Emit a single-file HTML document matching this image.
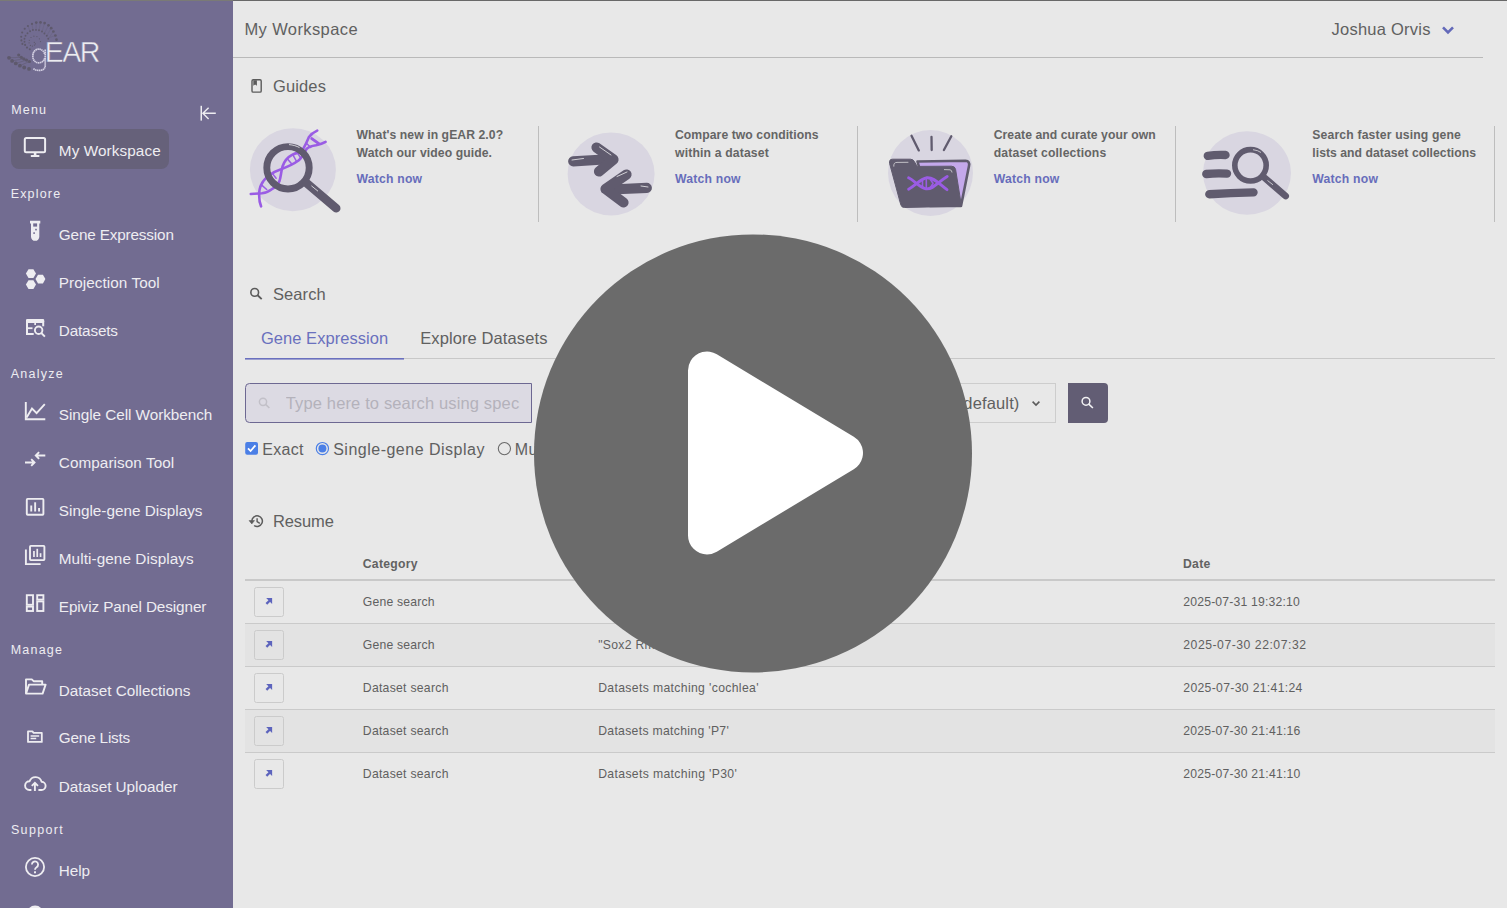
<!DOCTYPE html>
<html><head><meta charset="utf-8">
<style>
html,body{margin:0;padding:0;}
body{width:1507px;height:908px;overflow:hidden;position:relative;background:#e8e8e8;font-family:"Liberation Sans", sans-serif;}
.t{position:absolute;white-space:nowrap;line-height:normal;}
svg.full{position:absolute;left:0;top:0;}
</style></head><body>
<svg class="full" width="1507" height="908" viewBox="0 0 1507 908">

<rect x="0" y="0" width="233" height="908" fill="#726c91"/>
<rect x="0" y="0" width="233" height="1" fill="#7a7a76"/><rect x="233" y="0" width="1274" height="1" fill="#686868"/>
<rect x="11" y="129" width="158" height="40" rx="8" fill="#66617a"/>
<rect x="233" y="57" width="1250" height="1" fill="#b9b9b9"/>
<!-- guide dividers -->
<rect x="538" y="126" width="1" height="96" fill="#bdbdbd"/>
<rect x="857" y="126" width="1" height="96" fill="#bdbdbd"/>
<rect x="1175" y="126" width="1" height="96" fill="#bdbdbd"/>
<rect x="1494" y="126" width="1" height="96" fill="#bdbdbd"/>
<!-- tabs -->
<rect x="245" y="358" width="1250" height="1" fill="#c8c8c8"/>
<rect x="245" y="358" width="159" height="1.6" fill="#6a70be"/>
<!-- input -->
<path d="M249.5 383.5 H531.5 V422.5 H249.5 A4 4 0 0 1 245.5 418.5 V387.5 A4 4 0 0 1 249.5 383.5 Z" fill="#dcdae3" stroke="#6d6892" stroke-width="1"/>
<!-- select -->
<rect x="880.5" y="383.5" width="175" height="39" fill="none" stroke="#cdcdcd" stroke-width="1"/>
<path d="M1068 383 H1104 A4 4 0 0 1 1108 387 V419 A4 4 0 0 1 1104 423 H1068 Z" fill="#625d74"/>
<!-- table -->
<rect x="245" y="579" width="1250" height="2" fill="#c9c9c9"/>
<rect x="245" y="624" width="1250" height="42" fill="#e3e3e3"/>
<rect x="245" y="710" width="1250" height="42" fill="#e3e3e3"/>
<rect x="245" y="623" width="1250" height="1" fill="#cacaca"/>
<rect x="245" y="666" width="1250" height="1" fill="#cacaca"/>
<rect x="245" y="709" width="1250" height="1" fill="#cacaca"/>
<rect x="245" y="752" width="1250" height="1" fill="#cacaca"/>
<rect x="254.5" y="587.5" width="29" height="29" rx="2" fill="none" stroke="#cbcbcb" stroke-width="1"/>
<path d="M266.4 603.9 L270.6 599.7" stroke="#5d64bd" stroke-width="2.3"/><path d="M266.2 598 H272.1 V603.9 Z" fill="#5d64bd"/>
<rect x="254.5" y="630.5" width="29" height="29" rx="2" fill="none" stroke="#cbcbcb" stroke-width="1"/>
<path d="M266.4 646.9 L270.6 642.7" stroke="#5d64bd" stroke-width="2.3"/><path d="M266.2 641 H272.1 V646.9 Z" fill="#5d64bd"/>
<rect x="254.5" y="673.5" width="29" height="29" rx="2" fill="none" stroke="#cbcbcb" stroke-width="1"/>
<path d="M266.4 689.9 L270.6 685.7" stroke="#5d64bd" stroke-width="2.3"/><path d="M266.2 684 H272.1 V689.9 Z" fill="#5d64bd"/>
<rect x="254.5" y="716.5" width="29" height="29" rx="2" fill="none" stroke="#cbcbcb" stroke-width="1"/>
<path d="M266.4 732.9 L270.6 728.7" stroke="#5d64bd" stroke-width="2.3"/><path d="M266.2 727 H272.1 V732.9 Z" fill="#5d64bd"/>
<rect x="254.5" y="759.5" width="29" height="29" rx="2" fill="none" stroke="#cbcbcb" stroke-width="1"/>
<path d="M266.4 775.9 L270.6 771.7" stroke="#5d64bd" stroke-width="2.3"/><path d="M266.2 770 H272.1 V775.9 Z" fill="#5d64bd"/>

<!-- monitor -->
<rect x="24.8" y="137.9" width="20.3" height="14.3" rx="1.5" fill="none" stroke="#eeedf1" stroke-width="2"/>
<rect x="33.8" y="153" width="2.6" height="2.5" fill="#eeedf1"/>
<rect x="30.8" y="154.9" width="8.6" height="2.2" rx="0.6" fill="#eeedf1"/>
<!-- collapse |<- -->
<rect x="200.5" y="105.8" width="1.5" height="14.8" fill="#eeedf1"/>
<path d="M215.8 113.3 H203.2 M208.6 107.7 L202.9 113.3 L208.6 118.9" fill="none" stroke="#eeedf1" stroke-width="1.4"/>
<!-- test tube -->
<path d="M30 220.8 H40.3 V223.4 H39.3 V236.7 A4.15 4.15 0 0 1 31 236.7 V223.4 H30 Z" fill="#eeedf1"/>
<rect x="33.2" y="223.4" width="3.9" height="3.2" fill="#726c91"/>
<rect x="35.2" y="228.8" width="1.6" height="1.6" fill="#726c91"/>
<rect x="33.3" y="232.3" width="1.6" height="1.6" fill="#726c91"/>
<!-- hexagons -->
<path d="M28.5 269.2 H33.4 L36 273.6 L33.4 278 H28.5 L25.9 273.6 Z" fill="#eeedf1"/>
<path d="M28.5 280.2 H33.4 L36 284.6 L33.4 289 H28.5 L25.9 284.6 Z" fill="#eeedf1"/>
<path d="M38 274.7 H42.9 L45.4 279.1 L42.9 283.5 H38 L35.5 279.1 Z" fill="#eeedf1"/>
<!-- datasets EQ -->
<rect x="26" y="318.9" width="18.2" height="4" rx="1.2" fill="#eeedf1"/>
<rect x="26" y="321" width="2" height="14" fill="#eeedf1"/>
<rect x="26" y="333" width="7.7" height="2" fill="#eeedf1"/>
<rect x="26" y="327.3" width="6.5" height="1.8" fill="#eeedf1"/>
<rect x="42.2" y="321" width="2" height="5.3" fill="#eeedf1"/>
<rect x="34.3" y="322" width="1.7" height="3" fill="#eeedf1"/>
<circle cx="38.65" cy="330.3" r="3.75" fill="none" stroke="#eeedf1" stroke-width="1.9"/>
<path d="M41.3 333 L44.9 336.6" stroke="#eeedf1" stroke-width="1.9"/>
<!-- line chart -->
<path d="M25.8 402 V419.2 H45.3" fill="none" stroke="#eeedf1" stroke-width="1.9"/>
<path d="M26.6 417.6 L32 408.6 L36.6 413.2 L44.8 404.2" fill="none" stroke="#eeedf1" stroke-width="1.9"/>
<!-- compare arrows -->
<path d="M25 462.5 H34.5 M31.2 459.2 L34.5 462.5 L31.2 465.8" fill="none" stroke="#eeedf1" stroke-width="1.9"/>
<path d="M45.3 455.5 H35.8 M39.1 452.2 L35.8 455.5 L39.1 458.8" fill="none" stroke="#eeedf1" stroke-width="1.9"/>
<!-- single gene displays -->
<rect x="26.8" y="498.9" width="16.6" height="15.8" rx="0.8" fill="none" stroke="#eeedf1" stroke-width="1.9"/>
<rect x="30.3" y="505.5" width="1.9" height="6" fill="#eeedf1"/>
<rect x="34.2" y="502.3" width="1.9" height="9.2" fill="#eeedf1"/>
<rect x="38.1" y="508" width="1.9" height="3.5" fill="#eeedf1"/>
<!-- multi gene -->
<rect x="30" y="545.9" width="14.4" height="14.2" rx="0.8" fill="none" stroke="#eeedf1" stroke-width="1.9"/>
<path d="M25.9 549.5 V564.1 H40.6" fill="none" stroke="#eeedf1" stroke-width="1.9"/>
<rect x="33.1" y="551" width="1.7" height="6" fill="#eeedf1"/>
<rect x="36.4" y="548.8" width="1.7" height="8.2" fill="#eeedf1"/>
<rect x="39.7" y="553.2" width="1.7" height="3.8" fill="#eeedf1"/>
<!-- epiviz dashboard -->
<rect x="26.8" y="595.2" width="6.2" height="9.6" fill="none" stroke="#eeedf1" stroke-width="1.9"/>
<rect x="37.2" y="595.2" width="6.2" height="4.4" fill="none" stroke="#eeedf1" stroke-width="1.9"/>
<rect x="26.8" y="606.6" width="6.2" height="4.4" fill="none" stroke="#eeedf1" stroke-width="1.9"/>
<rect x="37.2" y="601.4" width="6.2" height="9.6" fill="none" stroke="#eeedf1" stroke-width="1.9"/>
<!-- open folder -->
<path d="M26 693.6 V679.4 H31.8 L33.6 681.2 H42.2 V684.4" fill="none" stroke="#eeedf1" stroke-width="1.9" stroke-linejoin="round"/>
<path d="M26 693.6 L29 684.6 H45.6 L42.6 693.6 Z" fill="none" stroke="#eeedf1" stroke-width="1.9" stroke-linejoin="round"/>
<!-- gene lists folder -->
<path d="M28 731.4 H32.4 L33.6 732.8 H41.8 V741.9 H28 Z" fill="none" stroke="#eeedf1" stroke-width="1.8" stroke-linejoin="round"/>
<path d="M30.6 735.9 H39.2 M30.6 738.6 H36.2" stroke="#eeedf1" stroke-width="1.5"/>
<!-- cloud upload -->
<path d="M31.4 790 H29.4 A4.3 4.3 0 0 1 29.6 781.2 A6.3 6.3 0 0 1 41.6 781.8 A4.1 4.1 0 0 1 41.4 790 H38.4" fill="none" stroke="#eeedf1" stroke-width="1.9" stroke-linejoin="round"/>
<path d="M34.9 791 V782.8 M31.8 785.9 L34.9 782.8 L38 785.9" fill="none" stroke="#eeedf1" stroke-width="1.9"/>
<!-- help -->
<circle cx="35" cy="867" r="9.1" fill="none" stroke="#eeedf1" stroke-width="1.8"/>
<path d="M31.9 864.6 A3.1 3.1 0 1 1 36.6 867.2 C35.4 868 35 868.6 35 869.8" fill="none" stroke="#eeedf1" stroke-width="1.8"/>
<rect x="34" y="871.3" width="2" height="2" fill="#eeedf1"/>
<ellipse cx="35.1" cy="915.1" rx="8.9" ry="9.5" fill="#eeedf1"/>

<!-- user chevron -->
<path d="M1443 27.3 L1448 32.4 L1453 27.3" fill="none" stroke="#6369b9" stroke-width="2.6"/>
<!-- guides book -->
<rect x="252" y="79.8" width="9.2" height="12.3" rx="1.2" fill="none" stroke="#5b5b5b" stroke-width="1.4"/>
<path d="M253.3 80.3 H256.9 V85.8 L255.1 84.6 L253.3 85.8 Z" fill="#5b5b5b"/>
<!-- search heading icon -->
<circle cx="254.7" cy="292.4" r="3.85" fill="none" stroke="#5b5b5b" stroke-width="1.6"/>
<path d="M257.6 295.3 L261.7 299.1" stroke="#5b5b5b" stroke-width="1.9"/>
<!-- history icon -->
<path d="M251.8 520.7 A5.3 5.3 0 1 1 254.1 525.5" fill="none" stroke="#5b5b5b" stroke-width="1.5"/>
<path d="M249.1 520.6 H254.5 L251.8 523.9 Z" fill="#5b5b5b" stroke="#5b5b5b" stroke-width="0.6" stroke-linejoin="round"/>
<path d="M257.1 518.2 V521.6 L259.8 523.3" fill="none" stroke="#5b5b5b" stroke-width="1.4"/>
<!-- input search icon -->
<circle cx="263" cy="401.8" r="3.6" fill="none" stroke="#c2c0c8" stroke-width="1.5"/>
<path d="M265.6 404.4 L269.4 408" stroke="#c2c0c8" stroke-width="1.6"/>
<!-- select chevron -->
<path d="M1032.6 401.6 L1036 405 L1039.4 401.6" fill="none" stroke="#5b5b5b" stroke-width="1.6"/>
<!-- search button icon -->
<circle cx="1086" cy="401.3" r="3.9" fill="none" stroke="#f2f2f4" stroke-width="1.5"/>
<path d="M1088.8 404.1 L1092.9 408" stroke="#f2f2f4" stroke-width="1.6"/>
<!-- checkbox -->
<rect x="245.2" y="441.9" width="12.8" height="12.9" rx="2" fill="#4b7fe6"/>
<path d="M248 448.3 L250.6 451 L255.4 445.4" fill="none" stroke="#ffffff" stroke-width="1.8"/>
<!-- radios -->
<circle cx="322.4" cy="448.6" r="6.1" fill="#e8e8e8" stroke="#4b7fe6" stroke-width="1.2"/>
<circle cx="322.4" cy="448.6" r="4" fill="#4b7fe6"/>
<circle cx="504.4" cy="448.6" r="6.1" fill="#e8e8e8" stroke="#6a6a6a" stroke-width="1.1"/>

<line x1="36.25" y1="22.6" x2="36" y2="29.9" stroke="#5e596c" stroke-width="0.45" opacity="0.55"/>
<line x1="40.5" y1="22.4" x2="39" y2="30.2" stroke="#5e596c" stroke-width="0.45" opacity="0.55"/>
<line x1="44.6" y1="23.1" x2="42" y2="31.5" stroke="#5e596c" stroke-width="0.45" opacity="0.55"/>
<line x1="48.5" y1="25.3" x2="44.4" y2="33.5" stroke="#5e596c" stroke-width="0.45" opacity="0.55"/>
<line x1="51.2" y1="28.2" x2="46.8" y2="35.8" stroke="#5e596c" stroke-width="0.45" opacity="0.55"/>
<line x1="53.4" y1="31.5" x2="48.3" y2="38.8" stroke="#5e596c" stroke-width="0.45" opacity="0.55"/>
<line x1="32" y1="23.9" x2="32.9" y2="30" stroke="#5e596c" stroke-width="0.45" opacity="0.55"/>
<line x1="27.9" y1="26" x2="30.1" y2="31.3" stroke="#5e596c" stroke-width="0.45" opacity="0.55"/>
<line x1="55.4" y1="35.5" x2="49.5" y2="37.5" stroke="#5e596c" stroke-width="0.45" opacity="0.55"/>
<line x1="9" y1="57.8" x2="21.3" y2="57.3" stroke="#5e596c" stroke-width="0.9" opacity="0.55"/>
<line x1="12.1" y1="60.9" x2="23.8" y2="58.8" stroke="#5e596c" stroke-width="0.9" opacity="0.55"/>
<line x1="15.8" y1="63.4" x2="26.5" y2="60.1" stroke="#5e596c" stroke-width="0.9" opacity="0.55"/>
<line x1="19.9" y1="65.7" x2="29.4" y2="61.5" stroke="#5e596c" stroke-width="0.9" opacity="0.55"/>
<circle cx="36.25" cy="22.6" r="1.35" fill="#5e596c"/>
<circle cx="40.5" cy="22.4" r="1.35" fill="#5e596c"/>
<circle cx="44.6" cy="23.1" r="1.35" fill="#5e596c"/>
<circle cx="48.5" cy="25.3" r="1.35" fill="#5e596c"/>
<circle cx="51.2" cy="28.2" r="1.35" fill="#5e596c"/>
<circle cx="53.4" cy="31.5" r="1.35" fill="#5e596c"/>
<circle cx="55.4" cy="35.5" r="1.35" fill="#5e596c"/>
<circle cx="56.5" cy="39.7" r="1.35" fill="#5e596c"/>
<circle cx="32" cy="23.9" r="1.05" fill="#5e596c"/>
<circle cx="27.9" cy="26" r="1.05" fill="#5e596c"/>
<circle cx="24.7" cy="28.8" r="1.05" fill="#5e596c"/>
<circle cx="22.2" cy="32.5" r="1.05" fill="#5e596c"/>
<circle cx="21.2" cy="36.8" r="1.05" fill="#5e596c"/>
<circle cx="21.4" cy="40.4" r="1.05" fill="#5e596c"/>
<circle cx="22.4" cy="43.9" r="1.05" fill="#5e596c"/>
<circle cx="25.1" cy="44.9" r="1.05" fill="#5e596c"/>
<circle cx="27" cy="47.6" r="1.05" fill="#5e596c"/>
<circle cx="29.8" cy="49.2" r="1.05" fill="#5e596c"/>
<circle cx="30.1" cy="31.3" r="0.95" fill="#5e596c"/>
<circle cx="32.9" cy="30" r="0.95" fill="#5e596c"/>
<circle cx="36" cy="29.9" r="0.95" fill="#5e596c"/>
<circle cx="39" cy="30.2" r="0.95" fill="#5e596c"/>
<circle cx="42" cy="31.5" r="0.95" fill="#5e596c"/>
<circle cx="44.4" cy="33.5" r="0.95" fill="#5e596c"/>
<circle cx="46.8" cy="35.8" r="0.95" fill="#5e596c"/>
<circle cx="48.3" cy="38.8" r="0.95" fill="#5e596c"/>
<circle cx="27.5" cy="33.3" r="0.95" fill="#5e596c"/>
<circle cx="25.5" cy="35.8" r="0.95" fill="#5e596c"/>
<circle cx="24.5" cy="38.8" r="0.95" fill="#5e596c"/>
<circle cx="24.5" cy="41.8" r="0.95" fill="#5e596c"/>
<circle cx="31" cy="37.5" r="0.6" fill="#5e596c"/>
<circle cx="33.9" cy="36.2" r="0.6" fill="#5e596c"/>
<circle cx="36.9" cy="36.6" r="0.6" fill="#5e596c"/>
<circle cx="39.4" cy="38.8" r="0.6" fill="#5e596c"/>
<circle cx="40.5" cy="41.6" r="0.6" fill="#5e596c"/>
<circle cx="29.3" cy="40.3" r="0.6" fill="#5e596c"/>
<circle cx="29.1" cy="42.8" r="0.6" fill="#5e596c"/>
<circle cx="30.4" cy="45.4" r="0.6" fill="#5e596c"/>
<circle cx="32.4" cy="46.1" r="0.6" fill="#5e596c"/>
<circle cx="34.5" cy="45.1" r="0.6" fill="#5e596c"/>
<circle cx="35.4" cy="43.8" r="0.6" fill="#5e596c"/>
<circle cx="34.3" cy="42.4" r="0.6" fill="#5e596c"/>
<circle cx="9" cy="57.8" r="1.9" fill="#5e596c"/>
<circle cx="12.1" cy="60.9" r="1.9" fill="#5e596c"/>
<circle cx="15.8" cy="63.4" r="1.9" fill="#5e596c"/>
<circle cx="19.9" cy="65.7" r="1.9" fill="#5e596c"/>
<circle cx="24.2" cy="67.5" r="1.9" fill="#5e596c"/>
<circle cx="29" cy="68.9" r="1.9" fill="#5e596c"/>
<circle cx="18.7" cy="55" r="1.6" fill="#5e596c"/>
<circle cx="21.3" cy="57.3" r="1.6" fill="#5e596c"/>
<circle cx="23.8" cy="58.8" r="1.6" fill="#5e596c"/>
<circle cx="26.5" cy="60.1" r="1.6" fill="#5e596c"/>
<circle cx="29.4" cy="61.5" r="1.6" fill="#5e596c"/>
<path d="M45.2 49.6 V65.5 C45.2 69.6 42 70.4 38.8 70.4 C36.2 70.4 34.4 69.6 33.3 68.6 M44.6 53.8 C43.6 50.8 41.4 49.1 38.8 49.1 C35.2 49.1 32.8 52.2 32.8 56.1 C32.8 60 35.2 62.8 38.8 62.8 C41.6 62.8 43.6 61.2 44.6 58.4" fill="none" stroke="#d3cfe2" stroke-width="1.7" stroke-dasharray="1.5 0.45"/>

<ellipse cx="292.9" cy="169.7" rx="43" ry="41.5" fill="#d9d6e1"/>
<g fill="none" stroke="#9a5ce4" stroke-width="2.6" stroke-linecap="round">
<path d="M261.1 206.4 C258.6 201 258.4 190 261.1 184.9 C263 180.5 265 178.6 268.5 176 C272 173 275 171 281 169.2 C287 167 293 164.5 298.5 160.5 C302 157.5 304.5 152.5 306.5 149 C309 146.6 313 145.8 316 145.3 C319 144.6 322.5 143.6 325.6 141.8"/>
<path d="M250.8 194 C254 193.8 258.5 193.6 262 193.3 C266 192.6 269 191.5 271.4 189.5 C275.5 187 278 185 279.5 181 C281 176 281 172 282.5 166.5 C284 162 287 157.5 292 154.9 C295 153.2 298 152.6 300.4 152.1 C304 149 305.8 144 308.8 137.2 C311 134 314 132 317.2 130.6"/>
<path d="M262 185.4 L266.7 189.5 M273.3 174.6 L276.1 178.3 M287.3 158.7 L292 164.3 M292.9 154.9 L296.6 161.5 M297.6 153.1 L300.4 157.7 M306.9 143.7 L310.7 147.5" stroke-width="1.5"/>
<path d="M311.8 138.6 L318.8 143.6" stroke-width="3"/>
</g>
<circle cx="288" cy="167.8" r="21.2" fill="none" stroke="#605b6e" stroke-width="6.9"/>
<path d="M306.5 183 L336.2 208.3" stroke="#605b6e" stroke-width="8.6" stroke-linecap="round"/>
<path d="M289 144.6 C293 144.9 296.5 146 299.5 147.6" fill="none" stroke="#ffffff" stroke-width="0.9" opacity="0.8"/>
<path d="M311.4 185.8 L318 191.2" stroke="#ffffff" stroke-width="0.9" opacity="0.8"/>


<ellipse cx="611.1" cy="173.9" rx="43.5" ry="41.5" fill="#d9d6e1"/>
<g fill="none" stroke="#605b6e" stroke-width="10.2" stroke-linecap="round" stroke-linejoin="round">
<path d="M573.2 161.3 L604 159.5"/>
<path d="M596.5 147.5 L613.5 159.5 L599 171.5"/>
<path d="M646.8 187.9 L611 189.5"/>
<path d="M626.5 174.5 L605.5 189 L623.5 202.5"/>
</g>
<g fill="none" stroke="#ffffff" stroke-width="0.9" opacity="0.8" stroke-linecap="round">
<path d="M599.5 147 L611 155"/><path d="M572 160 L583.5 158.5"/>
<path d="M617 176.5 L627 172"/><path d="M641 186 L648 187"/>
</g>


<ellipse cx="930.5" cy="173" rx="42.5" ry="43" fill="#d9d6e1"/>
<g stroke="#605b6e" stroke-width="2.3" stroke-linecap="round">
<path d="M911.5 135.8 L918.8 150.4"/><path d="M931.5 136.8 L931.7 150"/><path d="M951.3 136.2 L943.9 150"/>
</g>
<path d="M917.5 161.5 L965.5 160.8 Q970 161 969 166 L961 206 L930 206 Z" fill="#c4a8eb" stroke="#605b6e" stroke-width="2.6" stroke-linejoin="round"/>
<path d="M892.5 159.2 L910.5 159.2 Q913.5 159.3 914.6 162 L917.2 166.4 L951.5 166.2 Q955 166.2 955.6 169.5 L961.5 206.2 L904.5 207.5 Q901.6 207.6 900.8 204.8 L889.6 163.5 Q888.8 159.3 892.5 159.2 Z" fill="#605b6e" stroke="#605b6e" stroke-width="1" stroke-linejoin="round"/>
<g fill="none" stroke="#f0f0f0" stroke-width="0.8" opacity="0.85">
<path d="M893.8 166.6 Q893.4 162.4 897 162.4 L908.4 162.3"/><path d="M944 169.6 L950 169.8 Q951.8 170 952 172.5"/>
</g>
<g fill="none" stroke="#9a5ce4" stroke-width="2.9" stroke-linecap="round">
<path d="M908.6 177.8 C915 181 919 187 926 188.8 C933 189.8 938 182 947.2 176.5"/>
<path d="M908.6 189.2 C915 186 920 179 927 177.8 C934 177.3 939 184 947 189.6"/>
<path d="M922.5 180.5 V186.5 M926.3 179.5 V188 M930.5 179.8 L933 183.3 L930.5 187.5" stroke-width="1.6"/>
</g>


<ellipse cx="1247" cy="173" rx="44" ry="41.8" fill="#d9d6e1"/>
<g fill="none" stroke="#605b6e" stroke-width="8.4" stroke-linecap="round">
<path d="M1207.8 155.8 Q1216 154.6 1225.5 155"/>
<path d="M1206.3 174 Q1216 173 1227 173.6"/>
<path d="M1209.3 194.2 Q1230 192.8 1253.5 192.4"/>
</g>
<circle cx="1250.5" cy="165.3" r="15.7" fill="none" stroke="#605b6e" stroke-width="5.6"/>
<path d="M1264.5 177.8 L1285.6 196" stroke="#605b6e" stroke-width="6.8" stroke-linecap="round"/>
<path d="M1253 149.7 Q1258 150.3 1261 152.5" fill="none" stroke="#ffffff" stroke-width="0.8" opacity="0.8"/>
<path d="M1267.5 180.5 L1273 184.8" stroke="#ffffff" stroke-width="0.8" opacity="0.8"/>

</svg>
<div class="t" style="left:11.20px;top:102.69px;font-size:12.5px;font-weight:400;color:#eeedf1;letter-spacing:1.180px;">Menu</div>
<div class="t" style="left:10.70px;top:186.99px;font-size:12.5px;font-weight:400;color:#eeedf1;letter-spacing:1.173px;">Explore</div>
<div class="t" style="left:10.70px;top:367.19px;font-size:12.5px;font-weight:400;color:#eeedf1;letter-spacing:1.274px;">Analyze</div>
<div class="t" style="left:10.70px;top:642.69px;font-size:12.5px;font-weight:400;color:#eeedf1;letter-spacing:1.219px;">Manage</div>
<div class="t" style="left:10.90px;top:822.69px;font-size:12.5px;font-weight:400;color:#eeedf1;letter-spacing:1.360px;">Support</div>
<div class="t" style="left:58.80px;top:142.15px;font-size:15.3px;font-weight:400;color:#eeedf1;letter-spacing:0.094px;">My Workspace</div>
<div class="t" style="left:58.80px;top:226.45px;font-size:15.3px;font-weight:400;color:#eeedf1;letter-spacing:-0.156px;">Gene Expression</div>
<div class="t" style="left:58.80px;top:274.15px;font-size:15.3px;font-weight:400;color:#eeedf1;letter-spacing:0.062px;">Projection Tool</div>
<div class="t" style="left:58.80px;top:322.15px;font-size:15.3px;font-weight:400;color:#eeedf1;letter-spacing:-0.172px;">Datasets</div>
<div class="t" style="left:58.80px;top:406.15px;font-size:15.3px;font-weight:400;color:#eeedf1;letter-spacing:-0.046px;">Single Cell Workbench</div>
<div class="t" style="left:58.80px;top:454.15px;font-size:15.3px;font-weight:400;color:#eeedf1;letter-spacing:0.066px;">Comparison Tool</div>
<div class="t" style="left:58.80px;top:502.15px;font-size:15.3px;font-weight:400;color:#eeedf1;letter-spacing:-0.000px;">Single-gene Displays</div>
<div class="t" style="left:58.80px;top:550.15px;font-size:15.3px;font-weight:400;color:#eeedf1;letter-spacing:0.080px;">Multi-gene Displays</div>
<div class="t" style="left:58.80px;top:598.15px;font-size:15.3px;font-weight:400;color:#eeedf1;letter-spacing:-0.103px;">Epiviz Panel Designer</div>
<div class="t" style="left:58.80px;top:682.15px;font-size:15.3px;font-weight:400;color:#eeedf1;letter-spacing:-0.016px;">Dataset Collections</div>
<div class="t" style="left:58.80px;top:729.15px;font-size:15.3px;font-weight:400;color:#eeedf1;letter-spacing:-0.183px;">Gene Lists</div>
<div class="t" style="left:58.80px;top:778.15px;font-size:15.3px;font-weight:400;color:#eeedf1;letter-spacing:-0.022px;">Dataset Uploader</div>
<div class="t" style="left:58.80px;top:862.15px;font-size:15.3px;font-weight:400;color:#eeedf1;letter-spacing:-0.067px;">Help</div>
<div class="t" style="left:244.40px;top:20.17px;font-size:16.5px;font-weight:400;color:#606060;letter-spacing:0.399px;">My Workspace</div>
<div class="t" style="left:1331.50px;top:20.07px;font-size:16.5px;font-weight:400;color:#606060;letter-spacing:0.250px;">Joshua Orvis</div>
<div class="t" style="left:273.00px;top:77.07px;font-size:16.5px;font-weight:400;color:#606060;letter-spacing:0.120px;">Guides</div>
<div class="t" style="left:356.50px;top:127.76px;font-size:12.2px;font-weight:700;color:#656565;letter-spacing:0.069px;">What's new in gEAR 2.0?</div>
<div class="t" style="left:356.50px;top:145.66px;font-size:12.2px;font-weight:700;color:#656565;letter-spacing:0.090px;">Watch our video guide.</div>
<div class="t" style="left:356.50px;top:171.96px;font-size:12.2px;font-weight:700;color:#676dbb;letter-spacing:0.214px;">Watch now</div>
<div class="t" style="left:675.00px;top:127.76px;font-size:12.2px;font-weight:700;color:#656565;letter-spacing:0.059px;">Compare two conditions</div>
<div class="t" style="left:675.00px;top:145.66px;font-size:12.2px;font-weight:700;color:#656565;letter-spacing:0.158px;">within a dataset</div>
<div class="t" style="left:675.00px;top:171.96px;font-size:12.2px;font-weight:700;color:#676dbb;letter-spacing:0.214px;">Watch now</div>
<div class="t" style="left:993.70px;top:127.76px;font-size:12.2px;font-weight:700;color:#656565;letter-spacing:0.057px;">Create and curate your own</div>
<div class="t" style="left:993.70px;top:145.66px;font-size:12.2px;font-weight:700;color:#656565;letter-spacing:0.158px;">dataset collections</div>
<div class="t" style="left:993.70px;top:171.96px;font-size:12.2px;font-weight:700;color:#676dbb;letter-spacing:0.214px;">Watch now</div>
<div class="t" style="left:1312.30px;top:127.76px;font-size:12.2px;font-weight:700;color:#656565;letter-spacing:0.158px;">Search faster using gene</div>
<div class="t" style="left:1312.30px;top:145.66px;font-size:12.2px;font-weight:700;color:#656565;letter-spacing:0.039px;">lists and dataset collections</div>
<div class="t" style="left:1312.30px;top:171.96px;font-size:12.2px;font-weight:700;color:#676dbb;letter-spacing:0.214px;">Watch now</div>
<div class="t" style="left:272.90px;top:285.37px;font-size:16.5px;font-weight:400;color:#606060;letter-spacing:0.120px;">Search</div>
<div class="t" style="left:260.90px;top:328.87px;font-size:16.5px;font-weight:400;color:#6a70be;letter-spacing:0.055px;">Gene Expression</div>
<div class="t" style="left:420.20px;top:328.87px;font-size:16.5px;font-weight:400;color:#606060;letter-spacing:0.103px;">Explore Datasets</div>
<div class="t" style="left:262.20px;top:440.82px;font-size:16px;font-weight:400;color:#606060;letter-spacing:0.337px;">Exact</div>
<div class="t" style="left:333.20px;top:440.82px;font-size:16px;font-weight:400;color:#606060;letter-spacing:0.494px;">Single-gene Display</div>
<div class="t" style="left:514.80px;top:440.82px;font-size:16px;font-weight:400;color:#606060;letter-spacing:0.415px;">Multi-gene Display</div>
<div class="t" style="left:919.50px;top:394.07px;font-size:16.5px;font-weight:400;color:#606060;letter-spacing:0.139px;right:487.5px;left:auto;">Gene (default)</div>
<div class="t" style="left:285.80px;top:394.07px;font-size:16.5px;font-weight:400;color:#b4b2bb;letter-spacing:0.139px;width:234px;overflow:hidden;">Type here to search using specific gene symbols</div>
<div class="t" style="left:272.90px;top:512.07px;font-size:16.5px;font-weight:400;color:#606060;letter-spacing:-0.076px;">Resume</div>
<div class="t" style="left:362.80px;top:557.16px;font-size:12.2px;font-weight:700;color:#626262;letter-spacing:0.271px;">Category</div>
<div class="t" style="left:1183.00px;top:557.16px;font-size:12.2px;font-weight:700;color:#626262;letter-spacing:0.295px;">Date</div>
<div class="t" style="left:362.80px;top:594.86px;font-size:12.2px;font-weight:400;color:#606060;letter-spacing:0.202px;">Gene search</div>
<div class="t" style="left:1183.30px;top:594.86px;font-size:12.2px;font-weight:400;color:#606060;letter-spacing:0.180px;">2025-07-31 19:32:10</div>
<div class="t" style="left:362.80px;top:637.86px;font-size:12.2px;font-weight:400;color:#606060;letter-spacing:0.202px;">Gene search</div>
<div class="t" style="left:598.20px;top:637.86px;font-size:12.2px;font-weight:400;color:#606060;letter-spacing:0.288px;">"Sox2 Rmb47"</div>
<div class="t" style="left:1183.30px;top:637.86px;font-size:12.2px;font-weight:400;color:#606060;letter-spacing:0.528px;">2025-07-30 22:07:32</div>
<div class="t" style="left:362.80px;top:680.86px;font-size:12.2px;font-weight:400;color:#606060;letter-spacing:0.281px;">Dataset search</div>
<div class="t" style="left:598.20px;top:680.86px;font-size:12.2px;font-weight:400;color:#606060;letter-spacing:0.360px;">Datasets matching 'cochlea'</div>
<div class="t" style="left:1183.30px;top:680.86px;font-size:12.2px;font-weight:400;color:#606060;letter-spacing:0.328px;">2025-07-30 21:41:24</div>
<div class="t" style="left:362.80px;top:723.86px;font-size:12.2px;font-weight:400;color:#606060;letter-spacing:0.281px;">Dataset search</div>
<div class="t" style="left:598.20px;top:723.86px;font-size:12.2px;font-weight:400;color:#606060;letter-spacing:0.319px;">Datasets matching 'P7'</div>
<div class="t" style="left:1183.30px;top:723.86px;font-size:12.2px;font-weight:400;color:#606060;letter-spacing:0.212px;">2025-07-30 21:41:16</div>
<div class="t" style="left:362.80px;top:766.86px;font-size:12.2px;font-weight:400;color:#606060;letter-spacing:0.281px;">Dataset search</div>
<div class="t" style="left:598.20px;top:766.86px;font-size:12.2px;font-weight:400;color:#606060;letter-spacing:0.362px;">Datasets matching 'P30'</div>
<div class="t" style="left:1183.30px;top:766.86px;font-size:12.2px;font-weight:400;color:#606060;letter-spacing:0.212px;">2025-07-30 21:41:10</div>
<div class="t" style="left:44.8px;top:35.9px;font-size:28.6px;color:#ececf0;letter-spacing:-1.6px;-webkit-text-stroke:0.45px #726c91;">EAR</div>
<svg class="full" width="1507" height="908" viewBox="0 0 1507 908">
<circle cx="753" cy="453.4" r="219" fill="#6b6b6b"/>
<path d="M707 370.5 L707 535.4 L844 453 Z" fill="#ffffff" stroke="#ffffff" stroke-width="38" stroke-linejoin="round"/>
</svg>
</body></html>
